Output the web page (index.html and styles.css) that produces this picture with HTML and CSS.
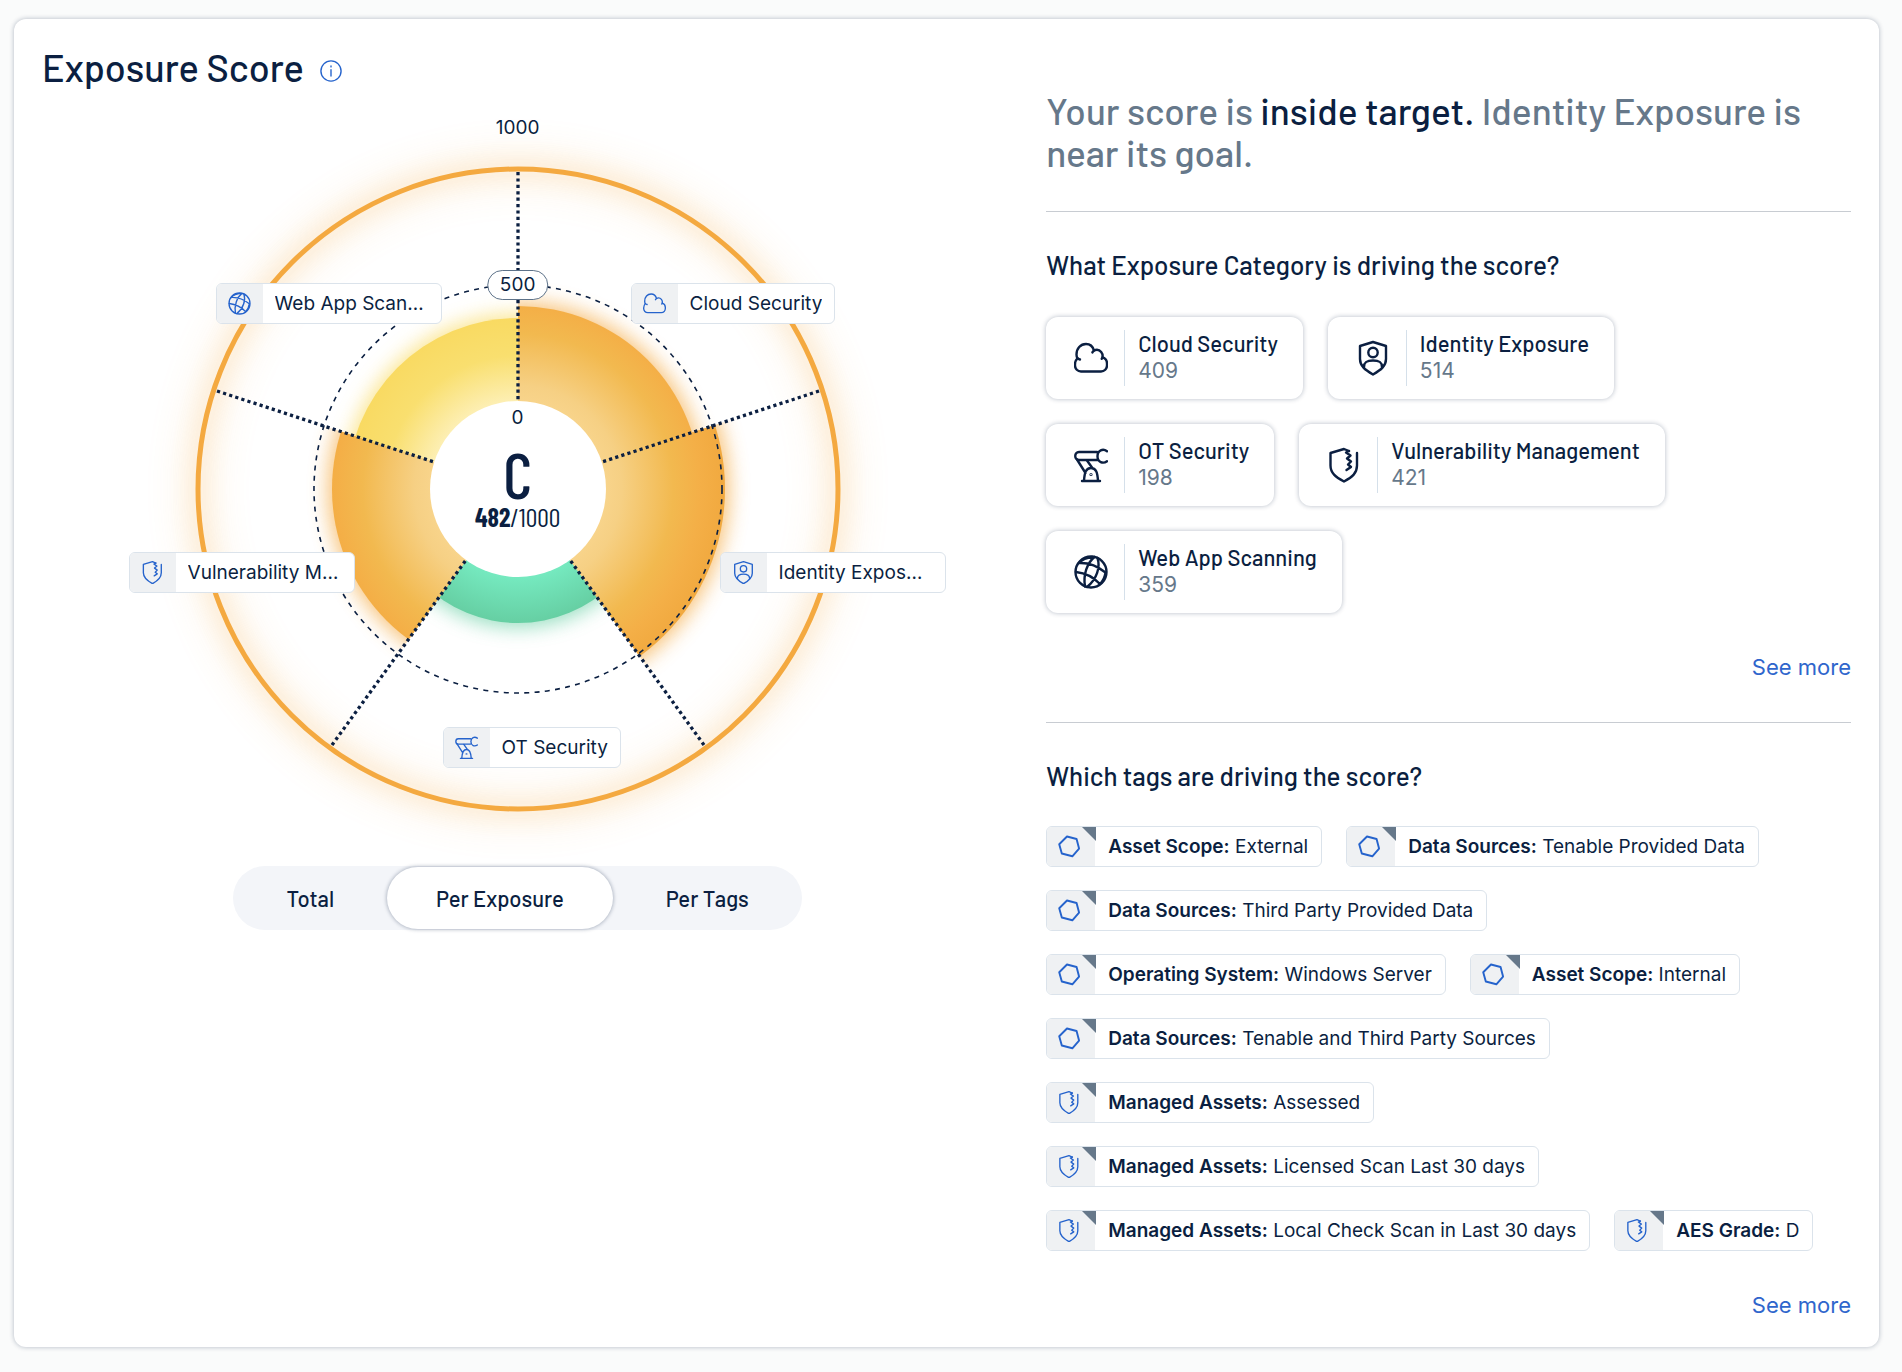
FILE: index.html
```
<!DOCTYPE html>
<html lang="en">
<head>
    <meta charset="UTF-8">
    <meta name="viewport" content="width=device-width, initial-scale=1.0">
    <title>Exposure Score</title>
    <link rel="stylesheet" href="styles.css">
</head>
<body>
    <!-- shared icons -->
    <svg class="icon-defs" aria-hidden="true">
        <symbol id="icon-cloud" viewBox="0 0 34 34">
            <path d="M7 30.500h20a6 6 0 0 0 6-6v-2a6.500 6.500 0 0 0-4.500-6.200c.8-4.300-2.500-7.600-5.500-7.600-1.200 0-2.200.4-3 .9C18.800 5.300 15.500 3 12 3c-5.500 0-9.500 4.500-9.500 10.500 0 1.500.3 2.600.9 3.700C1.800 19 1 21 1 23.500v1a6 6 0 0 0 6 6z"/>
            <path d="M3.400 17.200c1 .6 1.600 1 2.600 1.300M20 9.600c-.8.600-1.200 1-1.600 1.800M28.500 16.300c-.2.700-.4 1-.8 1.500"/>
        </symbol>
        <symbol id="icon-identity" viewBox="0 0 34 34">
            <path d="M17 1l13 4v13c0 7-5 11-13 15.500C9 29 4 25 4 18V5z"/>
            <circle cx="17" cy="11.500" r="4.700"/>
            <path d="M8 26c0-5 3-6.500 9-6.500s9 1.500 9 6.500"/>
        </symbol>
        <symbol id="icon-shield" viewBox="0 0 34 34">
            <path d="M22 3L17 1 3.500 5v12.500C3.500 25 8.500 29 17 33.500 25.500 29 30 25 30 17.500V5"/>
            <path d="M22 3l-3 1.500 4.500 3L20 10.500l4 3-3 3 3 2.500-4.500 3"/>
        </symbol>
        <symbol id="icon-robot" viewBox="0 0 34 34">
            <path d="M23 4H5C0 4 0 12 5 12h18M33 3.200c-4-3-9.500-1-9.500 5s5.500 8 9.500 5"/>
            <path d="M3 11.500L11.500 25M13 12.500l5 7M8 33h18M10 33c.5-8.500 2-13 7-13s6.500 4.500 7 13"/>
            <circle cx="17" cy="26.500" r=".4"/>
        </symbol>
        <symbol id="icon-globe" viewBox="0 0 34 34">
            <circle cx="17" cy="17" r="15.500"/>
            <path d="M20.500 2C13 8 9 20 11 31.500M23.500 3c3 9-.5 21-10.500 29M5 8c9-.5 18 2.500 26.500 9.500M2 17c9 1 17 4.500 24 12M18.500 2C13 2.500 8 4.500 5 8M31.500 17.500c-.5 4.500-2.500 8.500-5.500 11.500"/>
        </symbol>
        <symbol id="icon-tag" viewBox="0 0 24 24">
            <path d="M9.900 1.600l10 2.600 2.600 10-7 8-11-2.900-2.700-9.700z"/>
        </symbol>
    </svg>

    <main class="panel">
        <section class="score">
            <h1>Exposure Score
                <button class="info" aria-label="About the score">
                    <svg viewBox="0 0 24 24"><circle cx="12" cy="12" r="11"/><path d="M12 10.500v7M12 6.500v1"/></svg>
                </button>
            </h1>

            <div class="chart">
                <svg class="rings" viewBox="-320 -320 640 640" aria-hidden="true">
                    <defs>
                        <radialGradient id="orange" gradientUnits="userSpaceOnUse" cx="0" cy="0" r="207">
                            <stop offset=".42" stop-color="#f8d48b"/>
                            <stop offset=".5" stop-color="#f6d084"/>
                            <stop offset=".75" stop-color="#f2b94f"/>
                            <stop offset=".88" stop-color="#f4af47"/>
                            <stop offset="1" stop-color="#f1a93f"/>
                        </radialGradient>
                        <radialGradient id="yellow" gradientUnits="userSpaceOnUse" cx="0" cy="0" r="171">
                            <stop offset=".51" stop-color="#fdefb4"/>
                            <stop offset=".78" stop-color="#f9df6f"/>
                            <stop offset="1" stop-color="#f9da62"/>
                        </radialGradient>
                        <radialGradient id="green" gradientUnits="userSpaceOnUse" cx="0" cy="0" r="134">
                            <stop offset=".66" stop-color="#75e9bf"/>
                            <stop offset="1" stop-color="#66cfa3"/>
                        </radialGradient>
                        <filter id="glow" filterUnits="userSpaceOnUse" x="-420" y="-420" width="840" height="840">
                            <feGaussianBlur stdDeviation="10"/>
                        </filter>
                        <filter id="halo" filterUnits="userSpaceOnUse" x="-420" y="-420" width="840" height="840">
                            <feGaussianBlur stdDeviation="18"/>
                        </filter>
                        <!-- one clip per fifth of the circle -->
                        <clipPath id="s1"><path d="M0 0V-320H320L304 -99z"/></clipPath>
                        <clipPath id="s2"><path d="M0 0L304 -99L380 120L188 259z"/></clipPath>
                        <clipPath id="s3"><path d="M0 0L188 259V320H-188V259z"/></clipPath>
                        <clipPath id="s4"><path d="M0 0L-188 259L-380 120L-304 -99z"/></clipPath>
                        <clipPath id="s5"><path d="M0 0L-304 -99L-320 -320H0z"/></clipPath>
                    </defs>

                    <circle class="ring-halo" r="320" filter="url(#halo)"/>
                    <circle class="ring-glow" r="320" filter="url(#glow)"/>

                    <g clip-path="url(#s1)"><circle r="187" fill="#f4a940" opacity=".7" filter="url(#glow)"/><circle r="183" fill="url(#orange)"/></g>
                    <g clip-path="url(#s2)"><circle r="211" fill="#f4a940" opacity=".7" filter="url(#glow)"/><circle r="207" fill="url(#orange)"/></g>
                    <g clip-path="url(#s3)"><circle r="138" fill="#66cfa3" opacity=".7" filter="url(#glow)"/><circle r="134" fill="url(#green)"/></g>
                    <g clip-path="url(#s4)"><circle r="190" fill="#f4a940" opacity=".7" filter="url(#glow)"/><circle r="186" fill="url(#orange)"/></g>
                    <g clip-path="url(#s5)"><circle r="175" fill="#f9da62" opacity=".7" filter="url(#glow)"/><circle r="171" fill="url(#yellow)"/></g>

                    <circle r="88" fill="#fff"/>
                    <circle class="ring" r="320"/>
                    <circle class="mid-ring" r="204"/>
                    <g class="spokes">
                        <path d="M0 -317V-88"/>
                        <path d="M301 -98L84 -27"/>
                        <path d="M186 256L52 71"/>
                        <path d="M-186 256L-52 71"/>
                        <path d="M-301 -98L-84 -27"/>
                    </g>
                </svg>

                <span class="scale scale-max">1000</span>
                <span class="scale scale-mid">500</span>
                <span class="scale scale-min">0</span>

                <div class="grade">
                    <strong class="letter">C</strong>
                    <span class="points"><b>482</b>/1000</span>
                </div>

                <div class="chip at-cloud"><svg class="chip-icon"><use href="#icon-cloud"/></svg><span>Cloud Security</span></div>
                <div class="chip at-identity"><svg class="chip-icon"><use href="#icon-identity"/></svg><span>Identity Exposure</span></div>
                <div class="chip at-ot"><svg class="chip-icon"><use href="#icon-robot"/></svg><span>OT Security</span></div>
                <div class="chip at-vuln"><svg class="chip-icon"><use href="#icon-shield"/></svg><span>Vulnerability Management</span></div>
                <div class="chip at-web"><svg class="chip-icon"><use href="#icon-globe"/></svg><span>Web App Scanning</span></div>
            </div>

            <div class="switch">
                <button>Total</button>
                <button class="active">Per Exposure</button>
                <button>Per Tags</button>
            </div>
        </section>

        <section class="details">
            <p class="summary">Your score is <strong>inside target.</strong> Identity Exposure is near its goal.</p>

            <div class="block">
                <h2>What Exposure Category is driving the score?</h2>
                <div class="cards">
                    <button class="card"><svg><use href="#icon-cloud"/></svg><span class="card-text">Cloud Security<small>409</small></span></button>
                    <button class="card"><svg><use href="#icon-identity"/></svg><span class="card-text">Identity Exposure<small>514</small></span></button>
                    <button class="card"><svg><use href="#icon-robot"/></svg><span class="card-text">OT Security<small>198</small></span></button>
                    <button class="card"><svg><use href="#icon-shield"/></svg><span class="card-text">Vulnerability Management<small>421</small></span></button>
                    <button class="card"><svg><use href="#icon-globe"/></svg><span class="card-text">Web App Scanning<small>359</small></span></button>
                </div>
                <a class="more" href="#">See more</a>
            </div>

            <div class="block">
                <h2>Which tags are driving the score?</h2>
                <div class="tags">
                    <div class="chip tag"><svg class="chip-icon"><use href="#icon-tag"/></svg><span><b>Asset Scope:</b> External</span></div>
                    <div class="chip tag"><svg class="chip-icon"><use href="#icon-tag"/></svg><span><b>Data Sources:</b> Tenable Provided Data</span></div>
                    <div class="chip tag"><svg class="chip-icon"><use href="#icon-tag"/></svg><span><b>Data Sources:</b> Third Party Provided Data</span></div>
                    <div class="chip tag"><svg class="chip-icon"><use href="#icon-tag"/></svg><span><b>Operating System:</b> Windows Server</span></div>
                    <div class="chip tag"><svg class="chip-icon"><use href="#icon-tag"/></svg><span><b>Asset Scope:</b> Internal</span></div>
                    <div class="chip tag"><svg class="chip-icon"><use href="#icon-tag"/></svg><span><b>Data Sources:</b> Tenable and Third Party Sources</span></div>
                    <div class="chip tag"><svg class="chip-icon"><use href="#icon-shield"/></svg><span><b>Managed Assets:</b> Assessed</span></div>
                    <div class="chip tag"><svg class="chip-icon"><use href="#icon-shield"/></svg><span><b>Managed Assets:</b> Licensed Scan Last 30 days</span></div>
                    <div class="chip tag"><svg class="chip-icon"><use href="#icon-shield"/></svg><span><b>Managed Assets:</b> Local Check Scan in Last 30 days</span></div>
                    <div class="chip tag"><svg class="chip-icon"><use href="#icon-shield"/></svg><span><b>AES Grade:</b> D</span></div>
                </div>
                <a class="more" href="#">See more</a>
            </div>
        </section>
    </main>
</body>
</html>
```

FILE: styles.css
```
* {
    box-sizing: border-box;
}

body {
    margin: 0;
    padding: 19px 23px 24px 14px;
    background-color: #fafbfb;
    color: #0b1f41;
    font-family: Inter, sans-serif;
}

button {
    padding: 0;
    border: none;
    background: none;
    color: inherit;
    cursor: pointer;
}

svg {
    fill: none;
    stroke: currentColor;
    stroke-width: 2;
    stroke-linecap: round;
    stroke-linejoin: round;
}

.icon-defs {
    position: absolute;
    width: 0;
    height: 0;
}

.panel {
    display: grid;
    grid-template-columns: 1.182fr 1fr;
    gap: 53px;
    padding: 28px;
    background-color: #fff;
    border-radius: 12px;
    box-shadow: 0 0 5px rgba(11, 31, 65, 0.3);
}

h1, h2, .summary, .switch button, .card {
    font-family: Barlow, Roboto, sans-serif;
    font-weight: 500;
}

h1 {
    display: flex;
    align-items: baseline;
    gap: 16px;
    margin: 0;
    font-size: 38px;
    line-height: 40px;
}

.info {
    height: 22px;
    color: #2563cc;
}

.info svg {
    display: block;
    width: 22px;
    height: 22px;
    stroke-width: 1.5;
}

/* chart */
.chart {
    position: relative;
    width: 640px;
    height: 640px;
    margin: 82px auto 57px;
}

.rings {
    display: block;
    overflow: visible;
    width: 100%;
    height: 100%;
    stroke: none;
    stroke-linecap: butt;
}

.ring {
    stroke: #f4a940;
    stroke-width: 5;
}

.ring-glow {
    stroke: #f4a940;
    stroke-width: 20;
    opacity: 0.14;
}

.ring-halo {
    stroke: #f4a940;
    stroke-width: 40;
    opacity: 0.1;
}

.mid-ring {
    stroke: #0b1f41;
    stroke-width: 1.6;
    stroke-dasharray: 5 5.3;
}

.spokes {
    stroke: #0b1f41;
    stroke-width: 3.3;
    stroke-dasharray: 3.2 3.2;
}

.scale {
    position: absolute;
    left: 50%;
    transform: translateX(-50%);
    font-size: 19px;
    line-height: 28px;
}

.scale-max {
    top: -55px;
}

.scale-mid {
    top: 101px;
    padding: 0 12px;
    background-color: #fff;
    border: 1px solid #5d7289;
    border-radius: 15px;
}

.scale-min {
    top: 235px;
}

.grade {
    position: absolute;
    top: 275px;
    left: 0;
    right: 0;
    display: flex;
    flex-direction: column;
    align-items: center;
    font-family: "Barlow Condensed", Barlow, sans-serif;
}

.letter {
    font-size: 64px;
    font-weight: 500;
    line-height: 60px;
}

.points {
    font-size: 26px;
    line-height: 26px;
}

.chip {
    display: flex;
    align-items: center;
    height: 41px;
    padding-right: 12px;
    background-color: #fff;
    border: 1px solid #dbe3eb;
    border-radius: 6px;
    font-size: 19px;
    white-space: nowrap;
}

.chip-icon {
    flex: none;
    width: 46px;
    height: 39px;
    padding: 8px 12px 8px 11px;
    margin-right: 12px;
    background-color: #eff1f3;
    border-radius: 5px 0 0 5px;
    color: #2563cc;
}

.chip span {
    overflow: hidden;
    text-overflow: ellipsis;
}

.chip b {
    font-weight: 600;
}

.chart .chip {
    position: absolute;
    max-width: 226px;
}

.at-cloud {
    top: 114px;
    left: 433px;
}

.at-identity {
    top: 383px;
    left: 522px;
}

.at-ot {
    top: 558px;
    left: 245px;
}

.at-vuln {
    top: 383px;
    left: -69px;
}

.at-web {
    top: 114px;
    left: 18px;
}

/* view switch */
.switch {
    display: flex;
    width: max-content;
    height: 64px;
    margin: 0 auto;
    background-color: #f3f5f9;
    border-radius: 32px;
}

.switch button {
    padding: 0 53px;
    border-radius: 32px;
    font-size: 22px;
}

.switch .active {
    margin: 1px 0;
    padding: 0 49px;
    background-color: #fff;
    box-shadow: 0 0 4px rgba(11, 31, 65, 0.4);
}

/* right column */
.summary {
    margin: 42px 0 38px;
    color: #66788a;
    font-size: 37px;
    line-height: 42px;
}

.summary strong {
    color: #0b1f41;
    font-weight: 500;
}

.block {
    display: flex;
    flex-direction: column;
    padding-top: 37px;
    border-top: 1px solid #c8ccd2;
}

h2 {
    margin: 0;
    font-size: 26px;
    line-height: 32px;
}

.cards {
    display: flex;
    flex-wrap: wrap;
    gap: 25px;
    margin-top: 36px;
}

.card {
    display: flex;
    align-items: center;
    height: 82px;
    padding: 0 25px 0 28px;
    background-color: #fff;
    border-radius: 12px;
    box-shadow: 0 0 5px rgba(11, 31, 65, 0.3);
    font-size: 22px;
    text-align: left;
}

.card svg {
    width: 34px;
    height: 36px;
    margin-right: 16px;
    stroke-width: 2.4;
}

.card-text {
    padding: 0 0 2px 13px;
    border-left: 1px solid #d5e0ea;
    line-height: 27px;
}

.card small {
    display: block;
    color: #66788a;
    font-family: Inter, sans-serif;
    font-size: 21px;
    font-weight: 400;
}

.tags {
    display: flex;
    flex-wrap: wrap;
    gap: 23px 24px;
    margin-top: 34px;
}

.tag {
    position: relative;
    padding-right: 13px;
}

.tag .chip-icon {
    width: 48px;
    padding: 8px 14px 8px 10px;
    margin-right: 13px;
}

/* folded corner */
.tag::after {
    content: "";
    position: absolute;
    top: 0;
    left: 35px;
    border-top: 14px solid #66788a;
    border-left: 14px solid transparent;
}

.more {
    align-self: flex-end;
    margin: 40px 0 41px;
    color: #2f66cc;
    font-size: 22px;
    line-height: 28px;
    text-decoration: none;
}

.block:last-child .more {
    margin-bottom: 0;
}
```
